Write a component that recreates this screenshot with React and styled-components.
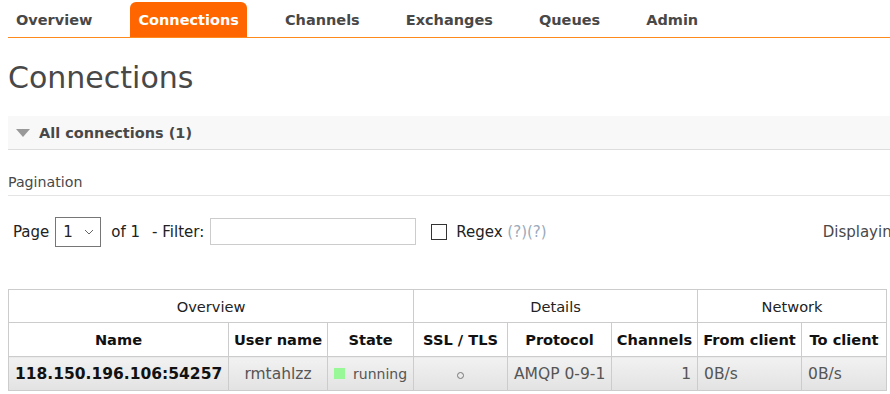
import React from "react";
import styled, { createGlobalStyle } from "styled-components";

const GlobalStyle = createGlobalStyle`
    body {
        margin: 0;
        overflow: hidden;
        background: #fff;
        font-family: "DejaVu Sans", Verdana, sans-serif;
        color: #484848;
    }
`;

const tabs = ["Overview", "Connections", "Channels", "Exchanges", "Queues", "Admin"];

const columns = [
    { label: "Name", width: 220 },
    { label: "User name", width: 99 },
    { label: "State", width: 86 },
    { label: "SSL / TLS", width: 94 },
    { label: "Protocol", width: 104 },
    { label: "Channels", width: 86 },
    { label: "From client", width: 104 },
    { label: "To client", width: 85 },
];

const App = () => {
    return (
        <Page>
            <GlobalStyle />
            <Nav>
                {tabs.map((tab) => (
                    <Tab key={tab} active={tab === "Connections"}>
                        {tab}
                    </Tab>
                ))}
            </Nav>

            <Title>Connections</Title>

            <SectionHeader>
                <Arrow />
                All connections (1)
            </SectionHeader>

            <SubTitle>Pagination</SubTitle>

            <FilterRow>
                <Label>Page</Label>
                <Select>
                    <span>1</span>
                    <svg width="10" height="6" viewBox="0 0 10 6">
                        <path d="M1 1l4 4 4-4" fill="none" stroke="#666" strokeWidth="1" />
                    </svg>
                </Select>
                <Label gap={12}>of 1</Label>
                <Label>- Filter:</Label>
                <TextInput />
                <Checkbox />
                <Label>
                    Regex <Help>(?)(?)</Help>
                </Label>
                <Displaying>Displaying 1 item , page size up to:</Displaying>
            </FilterRow>

            <Table>
                <colgroup>
                    {columns.map((c) => (
                        <col key={c.label} style={{ width: c.width }} />
                    ))}
                </colgroup>
                <thead>
                    <tr>
                        <GroupTh colSpan={3}>Overview</GroupTh>
                        <GroupTh colSpan={3}>Details</GroupTh>
                        <GroupTh colSpan={2}>Network</GroupTh>
                    </tr>
                    <tr>
                        {columns.map((c) => (
                            <Th key={c.label}>{c.label}</Th>
                        ))}
                    </tr>
                </thead>
                <tbody>
                    <tr>
                        <Td bold>118.150.196.106:54257</Td>
                        <Td>rmtahlzz</Td>
                        <Td align="left" size={14}>
                            <StateBox />
                            running
                        </Td>
                        <Td>
                            <Dot />
                        </Td>
                        <Td>AMQP 0-9-1</Td>
                        <Td align="right">1</Td>
                        <Td align="left">0B/s</Td>
                        <Td align="left">0B/s</Td>
                    </tr>
                </tbody>
            </Table>
        </Page>
    );
};

const Page = styled.div`
    padding: 2px 0 0 8px;
    width: 1100px;
`;

const Nav = styled.ul`
    display: flex;
    margin: 0;
    padding: 0;
    list-style: none;
    border-bottom: 1px solid #ff8a1c;
    width: 882px;
`;

const Tab = styled.li`
    height: 35px;
    line-height: 36px;
    padding: 0 8px;
    margin-right: 30px;
    font-size: 14.5px;
    font-weight: bold;
    border-radius: 6px 6px 0 0;
    color: ${(p) => (p.active ? "#fff" : "#484848")};
    background: ${(p) => (p.active ? "#ff6600" : "transparent")};
`;

const Title = styled.h1`
    margin: 18px 0 0;
    font-size: 30px;
    font-weight: normal;
    line-height: 44px;
    color: #484848;
`;

const SectionHeader = styled.div`
    display: flex;
    align-items: center;
    gap: 9px;
    height: 33px;
    margin-top: 16px;
    padding-left: 8px;
    background: #f8f8f8;
    border-bottom: 1px solid #ddd;
    font-size: 14.5px;
    font-weight: bold;
    width: 874px;
`;

const Arrow = styled.span`
    width: 0;
    height: 0;
    border-left: 7px solid transparent;
    border-right: 7px solid transparent;
    border-top: 8px solid #999;
`;

const SubTitle = styled.div`
    margin-top: 24px;
    padding-bottom: 5px;
    font-size: 14.2px;
    border-bottom: 1px solid #e4e4e4;
    width: 882px;
`;

const FilterRow = styled.div`
    display: flex;
    align-items: center;
    height: 31px;
    margin-top: 20px;
    padding-left: 5px;
    font-size: 15px;
    color: #222;
`;

const Label = styled.span`
    margin-right: ${(p) => p.gap || 6}px;
    white-space: nowrap;
`;

const Select = styled.div`
    display: flex;
    align-items: center;
    justify-content: space-between;
    box-sizing: border-box;
    width: 46px;
    height: 30px;
    padding: 0 6px 0 7px;
    margin-right: 10px;
    border: 1px solid #767676;
    font-size: 15px;
`;

const TextInput = styled.div`
    box-sizing: border-box;
    width: 206px;
    height: 27px;
    margin: 0 15px 0 0;
    border: 1px solid #ccc;
`;

const Checkbox = styled.div`
    box-sizing: border-box;
    width: 16px;
    height: 16px;
    margin-right: 9px;
    border: 1px solid #333;
`;

const Help = styled.span`
    color: #9ab;
`;

const Displaying = styled.span`
    margin-left: 270px;
    white-space: nowrap;
    color: #484848;
`;

const Table = styled.table`
    margin-top: 42px;
    border-collapse: collapse;
    table-layout: fixed;
    width: 879px;
    font-size: 14.6px;
`;

const GroupTh = styled.th`
    height: 32px;
    padding: 0;
    border: 1px solid #ccc;
    font-weight: normal;
    color: #222;
`;

const Th = styled.th`
    height: 33px;
    padding: 0 4px;
    border: 1px solid #ccc;
    font-weight: bold;
    color: #111;
    white-space: nowrap;
`;

const Td = styled.td`
    height: 33px;
    padding: 0 6px;
    border: 1px solid #ccc;
    background: linear-gradient(#f2f2f2, #e2e2e2);
    text-align: ${(p) => p.align || "center"};
    font-size: ${(p) => p.size || 15.5}px;
    font-weight: ${(p) => (p.bold ? "bold" : "normal")};
    color: ${(p) => (p.bold ? "#111" : "#555")};
    white-space: nowrap;
    overflow: hidden;
`;

const StateBox = styled.span`
    display: inline-block;
    width: 11px;
    height: 11px;
    margin-right: 8px;
    background: #98f898;
`;

const Dot = styled.span`
    display: inline-block;
    box-sizing: border-box;
    width: 7px;
    height: 7px;
    border: 1px solid #777;
    border-radius: 50%;
`;

export default App;
